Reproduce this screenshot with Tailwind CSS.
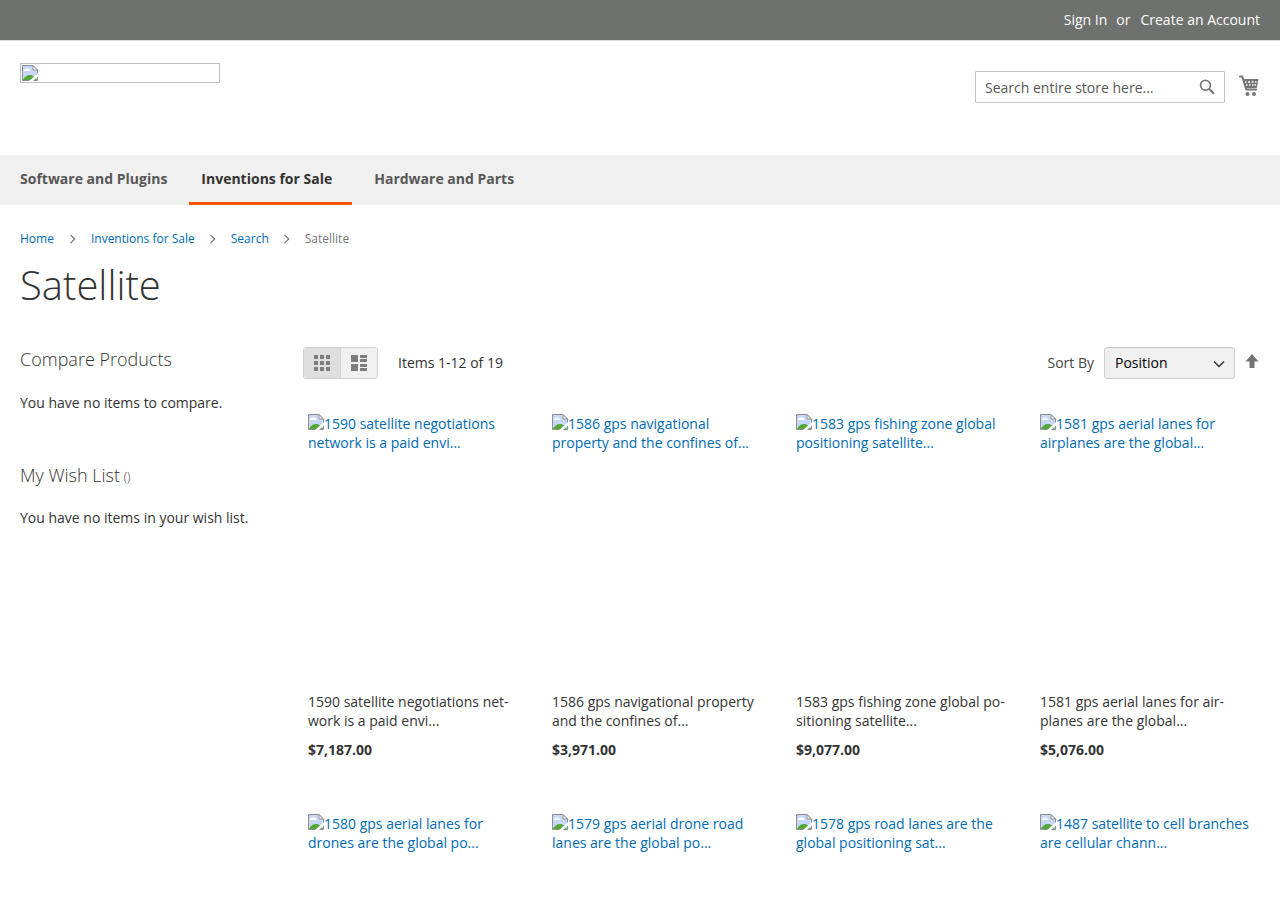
<!DOCTYPE html>
<html lang="en">
<head>
<meta charset="utf-8">
<meta name="viewport" content="width=device-width, initial-scale=1">
<title>Satellite</title>
<script src="https://cdn.jsdelivr.net/npm/@tailwindcss/browser@4"></script>
</head>
<body class="bg-white font-['Open_Sans','Noto_Sans',sans-serif] text-sm leading-[19px] text-[#333]">

<svg class="hidden" aria-hidden="true">
  <symbol id="missing" viewBox="0 0 16 16">
    <path d="M.5 .5h10.5l4.500 4.500v10.500h-15z" fill="#c6d8f6"/>
    <path d="M2 5.500a1.500 1.500 0 0 1 2-1.500a2 2 0 0 1 3.500.5a1 1 0 0 1 .5 1.500h-6z" fill="#fff"/>
    <path d="M1 15c1-3 4-5 7-5s5 2 7 5z" fill="#52a736"/>
    <path d="M.5 15.500v-15h10.500l4.500 4.500v10.500z" fill="none" stroke="#8f8f8f"/>
    <path d="M11 .5v4.500h4.500z" fill="#fff" stroke="#8f8f8f"/>
    <path d="M16 8l-9 8h4l5-4.500z" fill="#fff"/>
  </symbol>
  <symbol id="next" viewBox="0 0 8 10"><path d="M1.500 .8l4.200 4.200l-4.200 4.200" fill="none" stroke="#757575" stroke-width="1.200"/></symbol>
</svg>

<header>
  <div class="flex h-[41px] items-center justify-end border-b border-[#ddd] bg-[#6e716e] px-5 pb-[2px] text-white">
    <a href="#">Sign In</a><span class="ml-[9px] mr-[10px]">or</span><a href="#">Create an Account</a>
  </div>
  <div class="flex h-[114px] items-start justify-between px-5 pt-[22px]">
    <a href="#" aria-label="Store logo" class="block h-5 w-[200px] border border-[#c0c0c0] p-px"><svg class="size-4"><use href="#missing"/></svg></a>
    <div class="flex items-start gap-[13px] pt-2">
      <form class="relative">
        <input id="search" type="text" aria-label="Search" placeholder="Search entire store here..." class="block h-8 w-[250px] rounded-[1px] border border-[#c2c2c2] bg-white pl-[9px] pr-9 placeholder:text-[#575757]">
        <button type="button" aria-label="Search" class="absolute right-[10px] top-2 size-4">
          <svg viewBox="0 0 16 16" class="size-4" fill="none" stroke="#757575"><circle cx="6.500" cy="6.200" r="4.900" stroke-width="1.700"/><path d="M10 9.700l5 5" stroke-width="2.200"/></svg>
        </button>
      </form>
      <a href="#" aria-label="My Cart" class="mr-px mt-1 block">
        <svg viewBox="0 0 21 22" class="h-[22px] w-[21px]"><path d="M2 1.500h2.300l4 13h9.700" fill="none" stroke="#757575" stroke-width="2" stroke-linecap="round" stroke-linejoin="round"/><path d="M5 4h15.500l-1.800 9h-11z" fill="#757575"/><path d="M7 7h1.500M10 7h2M13.500 7h2M17 7h1.500M8 10h1.500M11 10h1.500M14 10h1.500M16.500 10h1.500" stroke="#fff" stroke-width="1.400"/><circle cx="9.500" cy="19" r="2" fill="#757575"/><circle cx="16" cy="19" r="2" fill="#757575"/></svg>
      </a>
    </div>
  </div>
  <nav class="flex h-[50px] gap-[10px] bg-[#f0f0f0] px-2 font-bold leading-[47px] text-[#575757]">
    <a href="#" class="px-3">Software and Plugins</a>
    <a href="#" class="border-b-3 border-[#ff5501] pl-3 pr-5 text-[#333]">Inventions for Sale</a>
    <a href="#" class="px-3">Hardware and Parts</a>
  </nav>
</header>

<main class="px-5">
  <nav aria-label="Breadcrumb" class="flex items-center pt-6 text-xs leading-[19px] text-[#757575]">
    <a href="#" class="text-[#006bb4]">Home</a>
    <svg class="ml-[15px] mr-[14px] h-[10px] w-2"><use href="#next"/></svg>
    <a href="#" class="text-[#006bb4]">Inventions for Sale</a>
    <svg class="ml-[14px] mr-[14px] h-[10px] w-2"><use href="#next"/></svg>
    <a href="#" class="text-[#006bb4]">Search</a>
    <svg class="ml-[14px] mr-[14px] h-[10px] w-2"><use href="#next"/></svg>
    <span>Satellite</span>
  </nav>
  <h1 class="mt-[15px] text-[40px] font-light leading-[44px]">Satellite</h1>

  <div class="mt-10 flex">
    <aside class="w-[283px] shrink-0">
      <h2 class="text-lg font-light leading-6">Compare Products</h2>
      <p class="mt-[22px]">You have no items to compare.</p>
      <h2 class="mt-[51px] text-lg font-light leading-6">My Wish List <span class="-ml-px align-[1px] text-xs leading-none">()</span></h2>
      <p class="mt-[21px]">You have no items in your wish list.</p>
    </aside>

    <section class="min-w-0 flex-1">
      <div class="flex h-8 items-center">
        <div class="flex h-8 w-[75px] overflow-hidden rounded-[3px] border border-[#d1d1d1]">
          <button aria-label="Grid" class="flex w-[37px] items-center justify-center border-r border-[#d1d1d1] bg-[#dedede]"><svg viewBox="0 0 16 16" class="size-4" fill="#7d7d7d"><path d="M0 0h4v4H0zM6 0h4v4H6zM12 0h4v4h-4zM0 6h4v4H0zM6 6h4v4H6zM12 6h4v4h-4zM0 12h4v4H0zM6 12h4v4H6zM12 12h4v4h-4z"/></svg></button>
          <button aria-label="List" class="flex flex-1 items-center justify-center bg-[#f0f0f0]"><svg viewBox="0 0 16 16" class="size-4" fill="#7d7d7d"><path d="M0 0h7v7H0zM0 9h7v7H0zM9 0h7v3H9zM9 4h7v3H9zM9 9h7v3H9zM9 13h7v3H9z"/></svg></button>
        </div>
        <p class="ml-5 pb-[2px]">Items 1-12 of 19</p>
        <label for="sort" class="ml-auto mr-[10px] pb-[2px] text-[#444]">Sort By</label>
        <div class="relative">
          <select id="sort" class="block h-8 w-[131px] appearance-none rounded-[3px] border border-[#ccc] bg-[#f0f0f0] pb-[2px] pl-[10px] pr-6 text-black"><option>Position</option><option>Product Name</option><option>Price</option></select>
          <svg viewBox="0 0 12 8" class="pointer-events-none absolute right-[10px] top-[13px] h-2 w-3"><path d="M1 1.500l5 5l5-5" fill="none" stroke="#333" stroke-width="1.500"/></svg>
        </div>
        <a href="#" aria-label="Set Descending Direction" class="ml-[10px] mr-[1px] pb-[2px]"><svg viewBox="0 0 14 18" class="h-[18px] w-[14px]"><path d="M7 1l6.500 7.500h-4v6.500h-5v-6.500h-4z" fill="#757575"/></svg></a>
      </div>

      <div class="mt-[35px] grid grid-cols-4 gap-x-[30px] gap-y-[55px] pl-[5px] pr-[6px]">
        <article><a href="#" class="block h-[278px] text-[#006bb4]"><svg class="inline size-4 align-[-1px]"><use href="#missing"/></svg>1590 satellite negotiations network is a paid envi...</a><a href="#" class="block">1590 satellite negotiations net&shy;work is a paid envi...</a><p class="mt-[10px] font-bold">$7,187.00</p></article>
        <article><a href="#" class="block h-[278px] text-[#006bb4]"><svg class="inline size-4 align-[-1px]"><use href="#missing"/></svg>1586 gps navigational property and the confines of...</a><a href="#" class="block">1586 gps navigational property and the confines of...</a><p class="mt-[10px] font-bold">$3,971.00</p></article>
        <article><a href="#" class="block h-[278px] text-[#006bb4]"><svg class="inline size-4 align-[-1px]"><use href="#missing"/></svg>1583 gps fishing zone global positioning satellite...</a><a href="#" class="block">1583 gps fishing zone global po&shy;sitioning satellite...</a><p class="mt-[10px] font-bold">$9,077.00</p></article>
        <article><a href="#" class="block h-[278px] text-[#006bb4]"><svg class="inline size-4 align-[-1px]"><use href="#missing"/></svg>1581 gps aerial lanes for airplanes are the global...</a><a href="#" class="block">1581 gps aerial lanes for air&shy;planes are the global...</a><p class="mt-[10px] font-bold">$5,076.00</p></article>
        <article><a href="#" class="block text-[#006bb4]"><svg class="inline size-4 align-[-1px]"><use href="#missing"/></svg>1580 gps aerial lanes for drones are the global po...</a></article>
        <article><a href="#" class="block text-[#006bb4]"><svg class="inline size-4 align-[-1px]"><use href="#missing"/></svg>1579 gps aerial drone road lanes are the global po...</a></article>
        <article><a href="#" class="block text-[#006bb4]"><svg class="inline size-4 align-[-1px]"><use href="#missing"/></svg>1578 gps road lanes are the global positioning sat...</a></article>
        <article><a href="#" class="block text-[#006bb4]"><svg class="inline size-4 align-[-1px]"><use href="#missing"/></svg>1487 satellite to cell branches are cellular chann...</a></article>
      </div>
    </section>
  </div>
</main>
</body>
</html>
